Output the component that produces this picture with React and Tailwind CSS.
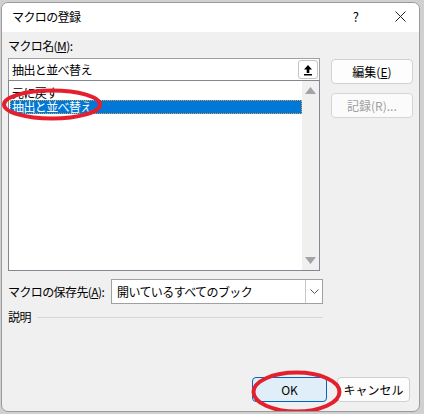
import React from 'react';

const font = { fontFamily: '"Noto Sans CJK JP", "Noto Sans", sans-serif' };

function Btn({ children, disabled, primary }) {
  const base = 'h-[25px] rounded-[4px] border flex items-center justify-center text-[12px] leading-none';
  const tone = primary
    ? 'bg-[#e0eef9] border-[#0067c0] text-black'
    : disabled
    ? 'bg-[#fbfbfb] border-[#d5d5d5] text-[#a0a0a0]'
    : 'bg-[#fdfdfd] border-[#d0d0d0] text-black';
  return <div className={`${base} ${tone}`}>{children}</div>;
}

function Tri({ down }) {
  return (
    <svg width="11" height="7" viewBox="0 0 11 7">
      <path d={down ? 'M0 0 H11 L5.5 7 Z' : 'M0 7 H11 L5.5 0 Z'} fill="#a3a3a3" />
    </svg>
  );
}

export default function App() {
  return (
    <div className="w-[424px] h-[414px] bg-[#d0d0d0] pt-[2px] pl-[1px]" style={font}>
      <div className="relative w-[419px] h-[410px] bg-[#f0f0f0] border border-[#9a9a9a] rounded-[7px] overflow-hidden flex flex-col">
        {/* title bar */}
        <div className="h-[29px] bg-white flex items-center shrink-0 pb-[2px]">
          <span className="ml-[10px] text-[12px] tracking-[-0.6px] text-black">マクロの登録</span>
          <span className="ml-auto mr-[36px] text-[13px] text-black">?</span>
          <svg className="mr-[13px]" width="11" height="11" viewBox="0 0 11 11">
            <path d="M0.5 0.5 L10.5 10.5 M10.5 0.5 L0.5 10.5" stroke="#222" strokeWidth="1" />
          </svg>
        </div>

        {/* body */}
        <div className="flex-1 flex flex-col px-[6px] pt-[7px]">
          <div className="flex gap-[11px]">
            <div className="w-[315px] flex flex-col">
              <div className="text-[12px] leading-[14px] tracking-[-0.6px] text-black">
                マクロ名(<span className="underline">M</span>):
              </div>
              <div className="mt-[5px] h-[23px] bg-white border border-[#a0a0a0] flex items-center pl-[3px] pr-[1px]">
                <span className="text-[12px] tracking-[-0.6px] text-black">抽出と並べ替え</span>
                <div className="ml-auto w-[20px] h-[19px] border border-[#c4c4c4] rounded-[3px] bg-white flex items-center justify-center">
                  <svg width="10" height="12" viewBox="0 0 10 12">
                    <path d="M5 1 L9 5.5 H6.3 V9 H3.7 V5.5 H1 Z" fill="#000" />
                    <rect x="1" y="10" width="8" height="1.5" fill="#000" />
                  </svg>
                </div>
              </div>
              <div className="h-[191px] -mt-[1px] bg-white border border-[#828790] flex">
                <div className="flex-1 pt-[5px] pl-[1px]">
                  <div className="h-[14px] text-[12px] leading-[13px] tracking-[-0.6px] text-black pl-[2px]">元に戻す</div>
                  <div className="h-[14px] bg-[#0078d7] border border-dotted border-[#e8a040] text-[12px] leading-[12px] tracking-[-0.6px] text-white pl-[1px]">
                    抽出と並べ替え
                  </div>
                </div>
                <div className="w-[17px] bg-[#f0f0f0] flex flex-col items-center justify-between py-[6px]">
                  <Tri />
                  <Tri down />
                </div>
              </div>
            </div>
            <div className="w-[83px] flex flex-col gap-[9px] pt-[20px]">
              <Btn>
                編集(<span className="underline">E</span>)
              </Btn>
              <Btn disabled>記録(R)...</Btn>
            </div>
          </div>

          <div className="mt-[8px] flex items-center w-[315px]">
            <span className="text-[12px] tracking-[-0.6px] text-black">
              マクロの保存先(<span className="underline">A</span>):
            </span>
            <div className="ml-auto w-[212px] h-[25px] bg-white border border-[#a0a0a0] flex items-center">
              <span className="pl-[5px] text-[12px] tracking-[-0.6px] text-black">開いているすべてのブック</span>
              <div className="ml-auto w-[17px] h-full border-l border-[#c8c8c8] flex items-center justify-center">
                <svg width="9" height="5" viewBox="0 0 9 5">
                  <path d="M0.5 0.5 L4.5 4.5 L8.5 0.5" stroke="#555" fill="none" />
                </svg>
              </div>
            </div>
          </div>

          <div className="mt-[4px] flex items-center w-[315px] gap-[6px]">
            <span className="text-[12px] tracking-[-0.6px] text-black">説明</span>
            <div className="flex-1 h-px bg-[#d8d8d8]" />
          </div>

          <div className="mt-auto mb-[9px] flex justify-end gap-[10px] pr-[3px]">
            <div className="w-[75px]">
              <Btn primary>OK</Btn>
            </div>
            <div className="w-[73px]">
              <Btn>キャンセル</Btn>
            </div>
          </div>
        </div>

        {/* red annotations */}
        <svg className="absolute left-0 top-0 pointer-events-none" width="419" height="410" viewBox="1 2 419 410">
          <ellipse cx="51" cy="103.5" rx="48" ry="14" fill="none" stroke="#e5202e" strokeWidth="4" />
          <ellipse cx="295.5" cy="391" rx="43" ry="19.5" fill="none" stroke="#e5202e" strokeWidth="4" />
        </svg>
      </div>
    </div>
  );
}
